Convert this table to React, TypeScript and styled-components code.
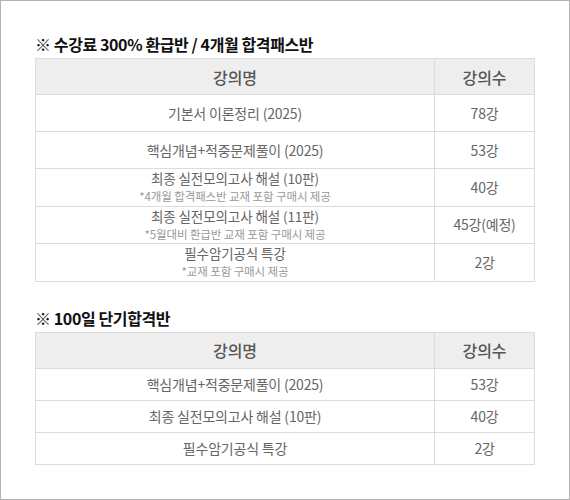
import React from 'react';
import styled, { createGlobalStyle } from 'styled-components';

const GlobalStyle = createGlobalStyle`
  html, body {
    margin: 0;
    padding: 0;
    background: #fff;
  }
  body {
    font-family: 'Noto Sans CJK KR', 'Noto Sans', sans-serif;
  }
`;

const Frame = styled.div`
  box-sizing: border-box;
  width: 570px;
  height: 500px;
  border: 1px solid #b3b3b3;
  padding: 33px 34px 0 34px;
`;

const Section = styled.section<{ $gap?: number }>`
  margin-top: ${(p) => p.$gap ?? 0}px;
`;

const Title = styled.h3`
  margin: 0 0 4px;
  font-size: 16px;
  line-height: 20px;
  font-weight: 700;
  color: #111;
  letter-spacing: -0.4px;
`;

const Table = styled.table`
  width: 500px;
  border-collapse: collapse;
  table-layout: fixed;
  border: 1px solid #dcdcdc;
`;

const HeadCell = styled.th`
  height: 35px;
  padding: 0;
  background: #eeeeee;
  border: 1px solid #dcdcdc;
  font-size: 16px;
  font-weight: 500;
  color: #555;
  text-align: center;
`;

const Cell = styled.td<{ $h: number }>`
  height: ${(p) => p.$h}px;
  padding: 0;
  border: 1px solid #dcdcdc;
  font-size: 14px;
  line-height: 17px;
  color: #666;
  text-align: center;
  vertical-align: middle;
  letter-spacing: -0.2px;
`;

const Name = styled.div<{ $sub?: boolean }>`
  font-size: ${(p) => (p.$sub ? 13.5 : 14)}px;
  line-height: ${(p) => (p.$sub ? 19 : 17)}px;
  letter-spacing: ${(p) => (p.$sub ? -0.1 : -0.2)}px;
`;

const Note = styled.div`
  font-size: 11.5px;
  line-height: 17.5px;
  color: #999;
  letter-spacing: -0.1px;
`;

type Row = { name: string; note?: string; count: string };

const fullCourse: Row[] = [
  { name: '기본서 이론정리 (2025)', count: '78강' },
  { name: '핵심개념+적중문제풀이 (2025)', count: '53강' },
  { name: '최종 실전모의고사 해설 (10판)', note: '*4개월 합격패스반 교재 포함 구매시 제공', count: '40강' },
  { name: '최종 실전모의고사 해설 (11판)', note: '*5월대비 환급반 교재 포함 구매시 제공', count: '45강(예정)' },
  { name: '필수암기공식 특강', note: '*교재 포함 구매시 제공', count: '2강' },
];

const shortCourse: Row[] = [
  { name: '핵심개념+적중문제풀이 (2025)', count: '53강' },
  { name: '최종 실전모의고사 해설 (10판)', count: '40강' },
  { name: '필수암기공식 특강', count: '2강' },
];

const CourseTable = ({ rows, rowHeight }: { rows: Row[]; rowHeight: number }) => (
  <Table>
    <colgroup>
      <col style={{ width: 399 }} />
      <col />
    </colgroup>
    <thead>
      <tr>
        <HeadCell>강의명</HeadCell>
        <HeadCell>강의수</HeadCell>
      </tr>
    </thead>
    <tbody>
      {rows.map((r) => (
        <tr key={r.name}>
          <Cell $h={rowHeight}>
            <Name $sub={!!r.note}>{r.name}</Name>
            {r.note && <Note>{r.note}</Note>}
          </Cell>
          <Cell $h={rowHeight}>{r.count}</Cell>
        </tr>
      ))}
    </tbody>
  </Table>
);

export default function App() {
  return (
    <>
      <GlobalStyle />
      <Frame>
        <Section>
          <Title>※ 수강료 300% 환급반 / 4개월 합격패스반</Title>
          <CourseTable rows={fullCourse} rowHeight={36} />
        </Section>
        <Section $gap={26}>
          <Title>※ 100일 단기합격반</Title>
          <CourseTable rows={shortCourse} rowHeight={31} />
        </Section>
      </Frame>
    </>
  );
}
